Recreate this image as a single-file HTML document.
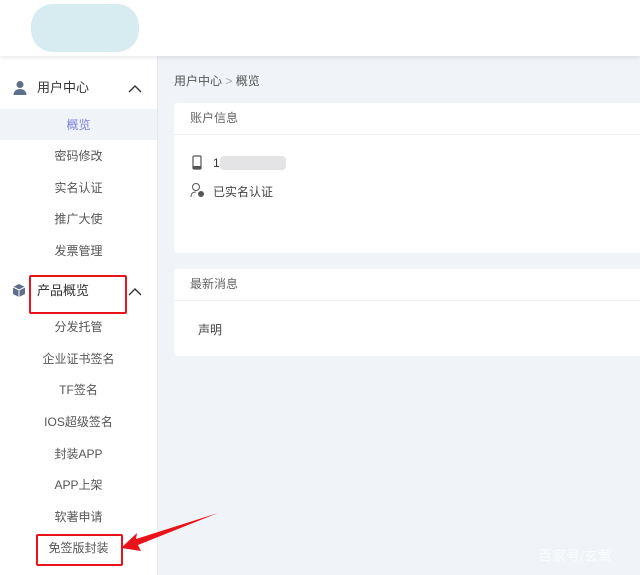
<!DOCTYPE html>
<html><head><meta charset="utf-8"><style>
body{margin:0;width:640px;height:575px;overflow:hidden;background:#f0f3f7;font-family:"Liberation Sans","Noto Sans CJK SC",sans-serif;position:relative}
.hdr{position:absolute;left:0;top:0;width:640px;height:56px;background:#fff;box-shadow:0 2px 4px rgba(0,0,0,.08);z-index:2}
.logo{position:absolute;left:31px;top:4px;width:108px;height:48px;border-radius:22px;background:#d3eaee;opacity:.9}
.side{position:absolute;left:0;top:56px;width:157px;height:519px;background:#fff;border-right:1px solid #e6e9ee}
.t{position:absolute;font-size:12px;color:#555;width:157px;text-align:center;line-height:16px}
.g{position:absolute;font-size:13px;color:#333;left:37px;line-height:16px}
.card{position:absolute;left:174px;width:470px;background:#fff;border-radius:3px}
.ch{height:31px;border-bottom:1px solid #eef0f3;font-size:12px;color:#666;line-height:31px;padding-left:16px}
.red{position:absolute;border:2px solid #e8141a;border-radius:2px}
</style></head><body>
<div class="hdr"><div class="logo"></div></div>
<div class="side">
<svg style="position:absolute;left:12px;top:24px" width="16" height="16" viewBox="0 0 16 16"><circle cx="8" cy="4.5" r="3.5" fill="#5f6f8a"/><path d="M1.5 15c0-4 3-6 6.5-6s6.5 2 6.5 6z" fill="#5f6f8a"/></svg>
<svg style="position:absolute;left:12px;top:227px" width="14" height="15" viewBox="0 0 14 15"><path d="M7 1l6 3v7l-6 3-6-3V4z" fill="#5f6f8a"/><path d="M1 4l6 3 6-3M7 7v7" stroke="#fff" stroke-width="1" fill="none"/></svg>
<svg style="position:absolute;left:128px;top:28px" width="14" height="9"><path d="M1 8l6-6 6 6" stroke="#333" stroke-width="1.4" fill="none"/></svg>
<svg style="position:absolute;left:128px;top:231px" width="14" height="9"><path d="M1 8l6-6 6 6" stroke="#333" stroke-width="1.4" fill="none"/></svg>
<div style="position:absolute;left:0;top:53px;width:157px;height:31px;background:#f0f3f7"></div>
</div>
<div class="g" style="top:80px">用户中心</div>
<div class="t" style="top:117px;color:#7b7fe0">概览</div>
<div class="t" style="top:148px">密码修改</div>
<div class="t" style="top:180px">实名认证</div>
<div class="t" style="top:211px">推广大使</div>
<div class="t" style="top:243px">发票管理</div>
<div class="g" style="top:283px">产品概览</div>
<div class="t" style="top:319px">分发托管</div>
<div class="t" style="top:351px">企业证书签名</div>
<div class="t" style="top:382px">TF签名</div>
<div class="t" style="top:414px">IOS超级签名</div>
<div class="t" style="top:446px">封装APP</div>
<div class="t" style="top:477px">APP上架</div>
<div class="t" style="top:509px">软著申请</div>
<div class="t" style="top:540px">免签版封装</div>
<div class="red" style="left:29px;top:275px;width:94px;height:35px"></div>
<div class="red" style="left:36px;top:534px;width:83px;height:28px"></div>
<svg style="position:absolute;left:0;top:0" width="640" height="575"><path d="M218 513L136 539 137 533 121 548 141 551 138 545z" fill="#e8141a"/></svg>
<div style="position:absolute;left:174px;top:72px;font-size:12px;color:#555">用户中心 <span style="color:#aaa">&gt;</span> 概览</div>
<div class="card" style="top:103px;height:150px"><div class="ch">账户信息</div>
<svg style="position:absolute;left:18px;top:52px" width="10" height="16"><rect x="1" y="1" width="8" height="13" rx="1" fill="none" stroke="#555" stroke-width="1.2"/><rect x="1" y="11" width="8" height="3" fill="#555"/></svg>
<div style="position:absolute;left:39px;top:53px;font-size:12px;color:#333">1</div>
<div style="position:absolute;left:46px;top:53px;width:66px;height:14px;background:#e4e4e6;border-radius:4px"></div>
<svg style="position:absolute;left:16px;top:79px" width="16" height="16"><circle cx="6" cy="5" r="3.5" fill="none" stroke="#555"/><path d="M1 15c0-4 2-5 5-5" fill="none" stroke="#555"/><circle cx="11" cy="12" r="3" fill="#555"/></svg>
<div style="position:absolute;left:39px;top:80px;font-size:12px;color:#444">已实名认证</div>
</div>
<div class="card" style="top:269px;height:87px"><div class="ch">最新消息</div>
<div style="position:absolute;left:24px;top:52px;font-size:12px;color:#444">声明</div></div>
<div style="position:absolute;left:538px;top:546px;font-size:14px;color:rgba(255,255,255,.7)">百家号/玄莺</div>
</body></html>
